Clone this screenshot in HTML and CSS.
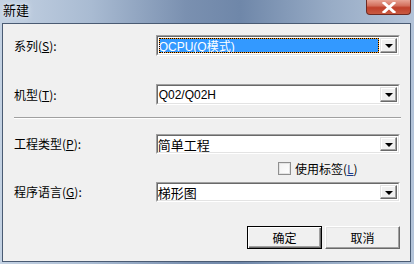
FILE: index.html
```html
<!DOCTYPE html>
<html lang="zh-CN">
<head>
    <meta charset="UTF-8">
    <title>新建</title>
    <link rel="stylesheet" href="styles.css">
</head>
<body>
    <div class="window">
        <div class="titlebar">
            <span class="title">新建</span>
            <div class="close">
                <svg width="16" height="11" viewBox="0 0 16 11">
                    <path d="M3 1 L13 10 M13 1 L3 10" stroke="#fff" stroke-width="3" stroke-linecap="square"/>
                </svg>
            </div>
        </div>
        <div class="client">
            <div class="row row-first">
                <label class="label">系列(<u>S</u>):</label>
                <div class="combo focused">
                    <div class="value"><span class="sel">QCPU(Q模式)</span></div>
                    <div class="arrow"><span class="tri"></span></div>
                </div>
            </div>
            <div class="row row-model">
                <label class="label">机型(<u>T</u>):</label>
                <div class="combo">
                    <div class="value">Q02/Q02H</div>
                    <div class="arrow"><span class="tri"></span></div>
                </div>
            </div>
            <div class="separator"></div>
            <div class="row row-type">
                <label class="label">工程类型(<u>P</u>):</label>
                <div class="combo">
                    <div class="value">简单工程</div>
                    <div class="arrow"><span class="tri"></span></div>
                </div>
            </div>
            <div class="check-row">
                <span class="checkbox"></span>
                <span class="check-label">使用标签(<u>L</u>)</span>
            </div>
            <div class="row row-lang">
                <label class="label">程序语言(<u>G</u>):</label>
                <div class="combo">
                    <div class="value">梯形图</div>
                    <div class="arrow"><span class="tri"></span></div>
                </div>
            </div>
            <div class="buttons">
                <button class="btn default">确定</button>
                <button class="btn">取消</button>
            </div>
        </div>
    </div>
</body>
</html>
```

FILE: styles.css
```css
html, body {
    margin: 0;
    padding: 0;
}
body {
    width: 414px;
    height: 264px;
    overflow: hidden;
    font-family: "Noto Sans CJK SC", "Liberation Sans", sans-serif;
    font-size: 12px;
    color: #000;
}
.window {
    width: 414px;
    height: 264px;
    box-sizing: border-box;
    padding: 0 3px 0 2px;
    background: linear-gradient(90deg, #c4d2e3 0%, #a9bbd2 22%, #7a90b0 45%, #6f87a9 58%, #98acc6 80%, #b4c4d9 100%);
}
.titlebar {
    height: 23px;
    display: flex;
    justify-content: space-between;
    align-items: flex-start;
}
.title {
    margin: 2px 0 0 1px;
    font-size: 13px;
    line-height: 16px;
    color: #000;
    text-shadow: 0 0 6px #e8eef6, 0 0 3px #e8eef6;
}
.close {
    width: 45px;
    height: 15px;
    margin-right: 0;
    box-sizing: border-box;
    border: 1px solid #6e2a22;
    border-top: none;
    border-radius: 0 0 4px 4px;
    background: linear-gradient(180deg, #e8a495 0%, #d4715e 40%, #c0402b 55%, #c85a42 100%);
    display: flex;
    align-items: center;
    justify-content: center;
}
.client {
    height: 239px;
    box-sizing: border-box;
    border: 1px solid #4a5b73;
    background: #f0f0f0;
    padding: 0 10px 0 11px;
    display: flex;
    flex-direction: column;
}
.row {
    display: flex;
    align-items: center;
    height: 21px;
}
.row-first {
    margin-top: 11px;
}
.row-model {
    margin-top: 28px;
}
.row-type {
    margin-top: 15px;
    height: 20px;
}
.row-lang {
    margin-top: 7px;
    height: 20px;
}
.label {
    width: 142px;
    line-height: 14px;
}
.combo {
    width: 245px;
    height: 100%;
    box-sizing: border-box;
    border: 1px solid;
    border-color: #a0a0a0 #ffffff #ffffff #a0a0a0;
    display: flex;
    background: #fff;
    position: relative;
}
.combo::before {
    content: "";
    position: absolute;
    inset: 0;
    border: 1px solid;
    border-color: #696969 #e3e3e3 #e3e3e3 #696969;
    pointer-events: none;
}
.value {
    flex: 1;
    padding: 1px 0 0 2px;
    display: flex;
    align-items: center;
    font-family: "Liberation Sans", "Noto Sans CJK SC", sans-serif;
    font-size: 12px;
}
.row-type .value, .row-lang .value {
    font-family: "Noto Sans CJK SC", sans-serif;
    font-size: 13px;
    padding-left: 1px;
}
.focused .value {
    margin: 2px 0 2px 2px;
    padding: 0 0 0 0;
    background: #3399ff;
    outline: 1px dotted #000;
    outline-offset: -1px;
    box-shadow: inset 0 0 0 1px #ff9a1e;
}
.sel {
    color: #fff;
}
.arrow {
    width: 17px;
    margin: 2px 2px 2px 1px;
    box-sizing: border-box;
    background: #f0f0f0;
    border: 1px solid;
    border-color: #e3e3e3 #696969 #696969 #e3e3e3;
    box-shadow: inset -1px -1px 0 #a0a0a0, inset 1px 1px 0 #fff;
    display: flex;
    align-items: center;
    justify-content: center;
}
.tri {
    width: 0;
    height: 0;
    border-left: 4px solid transparent;
    border-right: 4px solid transparent;
    border-top: 4px solid #000;
    margin-top: 1px;
}
.separator {
    margin-top: 12px;
    width: 387px;
    height: 1px;
    background: #a0a0a0;
    border-bottom: 1px solid #fff;
}
.check-row {
    display: flex;
    align-items: center;
    margin: 8px 0 0 264px;
    height: 13px;
}
.checkbox {
    width: 13px;
    height: 13px;
    box-sizing: border-box;
    border: 1px solid #8f8f8f;
    background: linear-gradient(135deg, #f2f2f2, #ffffff);
    box-shadow: inset 0 0 0 1px #e4e4e4;
}
.check-label {
    margin-left: 4px;
    line-height: 14px;
}
.check-label u {
    color: #1a3a8a;
}
.buttons {
    display: flex;
    justify-content: flex-end;
    gap: 3px;
    margin-top: 24px;
    padding-right: 0;
}
.btn {
    width: 75px;
    height: 23px;
    box-sizing: border-box;
    font-family: "Noto Sans CJK SC", sans-serif;
    font-size: 12px;
    padding: 0;
    background: #f0f0f0;
    border: 1px solid;
    border-color: #ffffff #696969 #696969 #ffffff;
    box-shadow: inset -1px -1px 0 #a0a0a0, inset 1px 1px 0 #e3e3e3;
}
.btn.default {
    border: 1px solid #000;
    box-shadow: inset 1px 1px 0 #fff, inset -1px -1px 0 #696969, inset -2px -2px 0 #a0a0a0;
}
```
